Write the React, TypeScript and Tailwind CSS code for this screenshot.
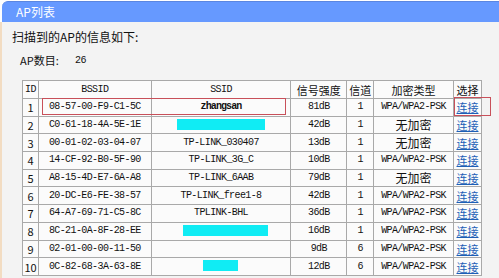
import React from "react";

type Row = {
  id: number;
  bssid: string;
  ssid: string;
  cyan?: number;
  cyanShift?: number;
  signal: string;
  channel: string;
  enc: string;
};

const rows: Row[] = [
  { id: 1, bssid: "08-57-00-F9-C1-5C", ssid: "zhangsan", signal: "81dB", channel: "1", enc: "WPA/WPA2-PSK" },
  { id: 2, bssid: "C0-61-18-4A-5E-1E", ssid: "", cyan: 88, signal: "42dB", channel: "1", enc: "无加密" },
  { id: 3, bssid: "00-01-02-03-04-07", ssid: "TP-LINK_030407", signal: "13dB", channel: "1", enc: "无加密" },
  { id: 4, bssid: "14-CF-92-B0-5F-90", ssid: "TP-LINK_3G_C", signal: "10dB", channel: "1", enc: "WPA/WPA2-PSK" },
  { id: 5, bssid: "A8-15-4D-E7-6A-A8", ssid: "TP-LINK_6AAB", signal: "79dB", channel: "1", enc: "无加密" },
  { id: 6, bssid: "20-DC-E6-FE-38-57", ssid: "TP-LINK_free1-8", signal: "42dB", channel: "1", enc: "WPA/WPA2-PSK" },
  { id: 7, bssid: "64-A7-69-71-C5-8C", ssid: "TPLINK-BHL", signal: "36dB", channel: "1", enc: "WPA/WPA2-PSK" },
  { id: 8, bssid: "8C-21-0A-8F-28-EE", ssid: "", cyan: 85, cyanShift: 10, signal: "16dB", channel: "1", enc: "WPA/WPA2-PSK" },
  { id: 9, bssid: "02-01-00-00-11-50", ssid: "", signal: "9dB", channel: "6", enc: "WPA/WPA2-PSK" },
  { id: 10, bssid: "0C-82-68-3A-63-8E", ssid: "", cyan: 35, signal: "12dB", channel: "6", enc: "WPA/WPA2-PSK" },
];

const cell = "border border-[#a9a9a9] p-0 text-center align-middle leading-[14px]";
const mono = "font-['Liberation_Mono','Noto_Sans_CJK_SC',monospace] text-[10px] tracking-[-0.6px]";
const cjk = "font-['Noto_Sans_CJK_SC',sans-serif] text-[11px]";

export default function App() {
  return (
    <div className="w-[499px] h-[278px] overflow-hidden bg-white text-[#111] font-['Noto_Sans_CJK_SC',sans-serif]">
      {/* title bar */}
      <div className="mt-[1px] ml-[2px] h-[21px] rounded-tl-[6px] bg-[#6699ff] border-t border-[#5b86e0] flex items-center pl-[14px]">
        <span className="text-white text-[12px] leading-none">AP列表</span>
      </div>

      <div className="h-[256px] bg-[#f3f3f3] border-l-2 border-[#f2dcc2]">
        <div className="pl-[10px] pt-[8px] text-[12px] leading-[14px]">扫描到的AP的信息如下:</div>
        <div className="flex pl-[18px] pt-[10px] text-[11px] leading-[13px]">
          <span className="w-[55px]">AP数目:</span>
          <span className={mono}>26</span>
        </div>

        <div className="relative ml-[20px] mt-[13px] w-[460px]">
          <table className="border-collapse bg-[#fbfbfb] table-fixed">
            <colgroup>
              <col className="w-[16px]" />
              <col className="w-[113px]" />
              <col className="w-[140px]" />
              <col className="w-[56px]" />
              <col className="w-[27px]" />
              <col className="w-[80px]" />
              <col className="w-[28px]" />
            </colgroup>
            <thead>
              <tr className="h-[18px]">
                <th className={`${cell} ${mono} font-normal`}>ID</th>
                <th className={`${cell} ${mono} font-normal`}>BSSID</th>
                <th className={`${cell} ${mono} font-normal`}>SSID</th>
                <th className={`${cell} ${cjk} font-normal`}>信号强度</th>
                <th className={`${cell} ${cjk} font-normal`}>信道</th>
                <th className={`${cell} ${cjk} font-normal`}>加密类型</th>
                <th className={`${cell} ${cjk} font-normal`}>选择</th>
              </tr>
            </thead>
            <tbody>
              {rows.map((r) => (
                <tr key={r.id} className="h-[17.7px]">
                  <td className={`${cell} ${cjk}`}>{r.id}</td>
                  <td className={`${cell} ${mono}`}>{r.bssid}</td>
                  <td className={`${cell} ${mono} ${r.id === 1 ? "font-bold tracking-[-0.9px]" : ""}`}>
                    {r.cyan ? (
                      <span
                        className="inline-block h-[11px] bg-[#10ecf4] align-middle"
                        style={{ width: r.cyan, marginLeft: r.cyanShift ?? 0 }}
                      />
                    ) : (
                      r.ssid
                    )}
                  </td>
                  <td className={`${cell} ${mono}`}>{r.signal}</td>
                  <td className={`${cell} ${mono}`}>{r.channel}</td>
                  <td className={`${cell} ${r.enc === "无加密" ? "font-['Noto_Sans_CJK_SC',sans-serif] text-[12px]" : mono}`}>{r.enc}</td>
                  <td className={`${cell} ${cjk}`}>
                    <a className="text-[#1d5fb6] underline">连接</a>
                  </td>
                </tr>
              ))}
            </tbody>
          </table>

          {/* highlight boxes */}
          <div className="absolute left-[20px] top-[18px] w-[244px] h-[17px] border border-[#c8505a]" />
          <div className="absolute left-[432px] top-[17px] w-[37px] h-[19px] border border-[#c8505a]" />
        </div>
      </div>
    </div>
  );
}
